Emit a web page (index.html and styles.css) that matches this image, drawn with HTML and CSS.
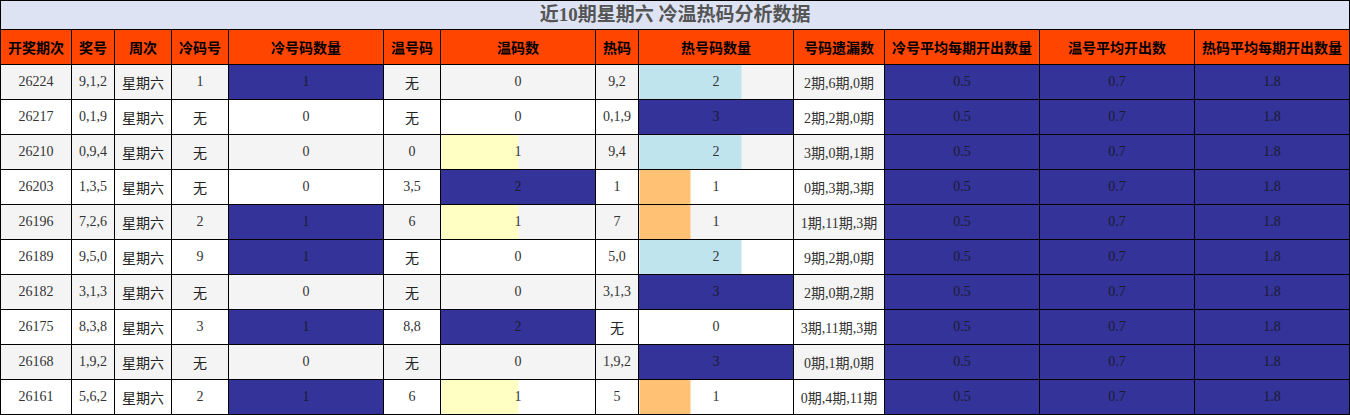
FILE: index.html
```html
<!DOCTYPE html>
<html lang="zh-CN">
<head>
<meta charset="utf-8">
<title>冷温热码分析数据</title>
<link rel="stylesheet" href="styles.css">
</head>
<body>
<table class="stats">
  <colgroup>
    <col class="w71"><col class="w43"><col class="w57"><col class="w57"><col class="w155">
    <col class="w57"><col class="w155"><col class="w43"><col class="w155"><col class="w91">
    <col class="w155"><col class="w155"><col class="w155">
  </colgroup>
  <thead>
    <tr class="title-row"><th colspan="13">近10期星期六 冷温热码分析数据</th></tr>
    <tr class="head-row">
      <th>开奖期次</th><th>奖号</th><th>周次</th><th>冷码号</th><th>冷号码数量</th><th>温号码</th><th>温码数</th><th>热码</th><th>热号码数量</th><th>号码遗漏数</th><th>冷号平均每期开出数量</th><th>温号平均开出数</th><th>热码平均每期开出数量</th>
    </tr>
  </thead>
  <tbody>
    <tr class="odd"><td>26224</td><td>9,1,2</td><td class="cjk">星期六</td><td>1</td><td class="navy">1</td><td class="cjk">无</td><td>0</td><td>9,2</td><td class="bar blue" style="--p:66%">2</td><td>2期,6期,0期</td><td class="navy">0.5</td><td class="navy">0.7</td><td class="navy">1.8</td></tr>
    <tr><td>26217</td><td>0,1,9</td><td class="cjk">星期六</td><td class="cjk">无</td><td>0</td><td class="cjk">无</td><td>0</td><td>0,1,9</td><td class="navy">3</td><td>2期,2期,0期</td><td class="navy">0.5</td><td class="navy">0.7</td><td class="navy">1.8</td></tr>
    <tr class="odd"><td>26210</td><td>0,9,4</td><td class="cjk">星期六</td><td class="cjk">无</td><td>0</td><td>0</td><td class="bar yellow" style="--p:50%">1</td><td>9,4</td><td class="bar blue" style="--p:66%">2</td><td>3期,0期,1期</td><td class="navy">0.5</td><td class="navy">0.7</td><td class="navy">1.8</td></tr>
    <tr><td>26203</td><td>1,3,5</td><td class="cjk">星期六</td><td class="cjk">无</td><td>0</td><td>3,5</td><td class="navy">2</td><td>1</td><td class="bar orange" style="--p:33%">1</td><td>0期,3期,3期</td><td class="navy">0.5</td><td class="navy">0.7</td><td class="navy">1.8</td></tr>
    <tr class="odd"><td>26196</td><td>7,2,6</td><td class="cjk">星期六</td><td>2</td><td class="navy">1</td><td>6</td><td class="bar yellow" style="--p:50%">1</td><td>7</td><td class="bar orange" style="--p:33%">1</td><td>1期,11期,3期</td><td class="navy">0.5</td><td class="navy">0.7</td><td class="navy">1.8</td></tr>
    <tr><td>26189</td><td>9,5,0</td><td class="cjk">星期六</td><td>9</td><td class="navy">1</td><td class="cjk">无</td><td>0</td><td>5,0</td><td class="bar blue" style="--p:66%">2</td><td>9期,2期,0期</td><td class="navy">0.5</td><td class="navy">0.7</td><td class="navy">1.8</td></tr>
    <tr class="odd"><td>26182</td><td>3,1,3</td><td class="cjk">星期六</td><td class="cjk">无</td><td>0</td><td class="cjk">无</td><td>0</td><td>3,1,3</td><td class="navy">3</td><td>2期,0期,2期</td><td class="navy">0.5</td><td class="navy">0.7</td><td class="navy">1.8</td></tr>
    <tr><td>26175</td><td>8,3,8</td><td class="cjk">星期六</td><td>3</td><td class="navy">1</td><td>8,8</td><td class="navy">2</td><td class="cjk">无</td><td>0</td><td>3期,11期,3期</td><td class="navy">0.5</td><td class="navy">0.7</td><td class="navy">1.8</td></tr>
    <tr class="odd"><td>26168</td><td>1,9,2</td><td class="cjk">星期六</td><td class="cjk">无</td><td>0</td><td class="cjk">无</td><td>0</td><td>1,9,2</td><td class="navy">3</td><td>0期,1期,0期</td><td class="navy">0.5</td><td class="navy">0.7</td><td class="navy">1.8</td></tr>
    <tr><td>26161</td><td>5,6,2</td><td class="cjk">星期六</td><td>2</td><td class="navy">1</td><td>6</td><td class="bar yellow" style="--p:50%">1</td><td>5</td><td class="bar orange" style="--p:33%">1</td><td>0期,4期,11期</td><td class="navy">0.5</td><td class="navy">0.7</td><td class="navy">1.8</td></tr>
  </tbody>
</table>
</body>
</html>
```

FILE: styles.css
```css
html, body {
  margin: 0;
  padding: 0;
  background: #ffffff;
}

.stats {
  width: 1350px;
  table-layout: fixed;
  border-collapse: collapse;
  font-family: "Liberation Serif", "Noto Sans CJK SC", serif;
  font-size: 14px;
  color: #333333;
}

.w71 { width: 71px; }
.w43 { width: 43px; }
.w57 { width: 57px; }
.w91 { width: 91px; }
.w155 { width: 155px; }

.stats th,
.stats td {
  border: 1px solid #000000;
  padding: 0;
  text-align: center;
  vertical-align: middle;
  white-space: nowrap;
  overflow: hidden;
}

.title-row th {
  height: 28px;
  background: #dde3f3;
  color: #555555;
  font-size: 19px;
  font-weight: bold;
  font-family: "Liberation Serif", "Noto Sans CJK SC", serif;
  line-height: 28px;
}

.head-row th {
  height: 34px;
  background: #ff4500;
  color: #000000;
  font-family: "Noto Sans CJK SC", sans-serif;
  font-size: 14px;
  font-weight: bold;
}

.stats tbody td {
  height: 34px;
  background: #ffffff;
}

.stats tbody tr.odd td {
  background-color: #f4f4f4;
}

.stats tbody td.cjk {
  font-family: "Noto Sans CJK SC", sans-serif;
  color: #222222;
}

.stats tbody td.navy,
.stats tbody tr.odd td.navy {
  background: #333399;
  color: #1c1c30;
}

.stats tbody td.bar {
  background-image: linear-gradient(to right, var(--c) var(--p), transparent var(--p));
}

.bar.yellow { --c: #ffffc4; }
.bar.blue { --c: #c0e4ee; }
.bar.orange { --c: #ffc275; }
```
